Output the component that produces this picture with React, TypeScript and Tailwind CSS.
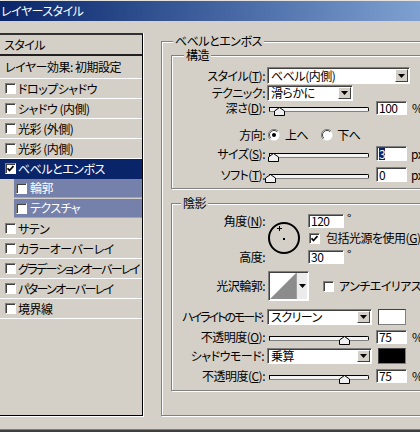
import React from 'react';

const sunken = 'border border-[#808080] border-r-white border-b-white shadow-[inset_1px_1px_0_#404040]';

const Check: React.FC<{ checked?: boolean }> = ({ checked = false }) => (
  <span className={`flex h-[11px] w-[11px] shrink-0 items-center justify-center bg-white ${sunken}`}>
    {checked && (
      <svg width="7" height="7" viewBox="0 0 7 7">
        <path d="M0.5 3.2 L2.5 5.5 L6.5 1" stroke="#000" strokeWidth="1.7" fill="none" />
      </svg>
    )}
  </span>
);

const Radio: React.FC<{ on?: boolean }> = ({ on = false }) => (
  <svg width="12" height="12" viewBox="0 0 12 12" className="shrink-0">
    <circle cx="6" cy="6" r="5.5" fill="#fff" />
    <path d="M10 2A5.5 5.5 0 0 0 2 10" stroke="#808080" strokeWidth="1" fill="none" />
    <path d="M9.2 2.8A4.5 4.5 0 0 0 2.8 9.2" stroke="#404040" strokeWidth="1" fill="none" />
    {on && <circle cx="6" cy="6" r="2" fill="#000" />}
  </svg>
);

const Arrow = () => (
  <svg width="7" height="4" viewBox="0 0 7 4">
    <path d="M0 0H7L3.5 4Z" fill="#000" />
  </svg>
);

const Select: React.FC<{ value: string; className: string }> = ({ value, className }) => (
  <div className={`flex shrink-0 items-stretch bg-white p-[1px] ${sunken} ${className}`}>
    <span className="flex flex-1 items-center pl-[2px] leading-none whitespace-nowrap">{value}</span>
    <span className="flex w-[13px] items-center justify-center border border-white border-r-[#404040] border-b-[#404040] bg-[#d4d0c8]">
      <Arrow />
    </span>
  </div>
);

const Field: React.FC<{ children: React.ReactNode; className: string }> = ({ children, className }) => (
  <div className={`flex shrink-0 items-center bg-white pl-[2px] leading-none ${sunken} ${className}`}>{children}</div>
);

const Slider: React.FC<{ pos: number }> = ({ pos }) => (
  <div className="relative ml-[2px] h-full w-[102px] shrink-0">
    <div className="absolute top-1/2 right-0 left-[2px] h-[5px] -translate-y-[1px] rounded-r-[2px] border border-[#000] border-b-[#808080] bg-[#f4f4f4]" />
    {/* thumb */}
    <svg className="absolute top-1/2 -translate-y-[1px]" style={{ left: pos }} width="11" height="9" viewBox="0 0 11 9">
      <path d="M0.5 8.5V4L5.5 0.5L10.5 4V8.5Z" fill="#f0f0f0" stroke="#000" />
    </svg>
  </div>
);

// right-aligned label column
const Label: React.FC<{ children: React.ReactNode; className?: string }> = ({ children, className = '' }) => (
  <span className={`flex w-[93px] shrink-0 justify-end leading-none whitespace-nowrap ${className}`}>
    <span>{children}</span>
  </span>
);

const U: React.FC<{ children: React.ReactNode }> = ({ children }) => <span className="underline underline-offset-1">{children}</span>;

type Item = { name: string; kind?: 'sel' | 'sub'; checked?: boolean; cls?: string };

const items: Item[] = [
  { name: 'ドロップシャドウ' },
  { name: 'シャドウ (内側)' },
  { name: '光彩 (外側)' },
  { name: '光彩 (内側)' },
  { name: 'ベベルとエンボス', kind: 'sel', checked: true },
  { name: '輪郭', kind: 'sub' },
  { name: 'テクスチャ', kind: 'sub' },
  { name: 'サテン' },
  { name: 'カラーオーバーレイ' },
  { name: 'グラデーションオーバーレイ', cls: 'tracking-[-1.6px]' },
  { name: 'パターンオーバーレイ', cls: 'tracking-[-1.6px]' },
  { name: '境界線' },
];

const ListRow: React.FC<{ item: Item }> = ({ item }) => {
  if (item.kind === 'sub') {
    return (
      <div className="flex h-[20px] shrink-0 border-b border-[#d4d0c8] pl-[14px]">
        <div className="flex flex-1 items-center gap-[3px] border-b border-[#9aa3c2] bg-[#7581ab] pl-[2px] text-white">
          <Check />
          <span className="leading-none">{item.name}</span>
        </div>
      </div>
    );
  }
  const sel = item.kind === 'sel';
  return (
    <div
      className={`flex h-[20px] shrink-0 items-center gap-[2px] overflow-hidden border-b pl-[5px] whitespace-nowrap ${
        sel ? 'border-[#0a246a] bg-[#0a246a] text-white' : 'border-white'
      }`}
    >
      <Check checked={item.checked} />
      <span className={`leading-none ${item.cls ?? ''}`}>{item.name}</span>
    </div>
  );
};

export default function App() {
  return (
    <div className="flex h-[432px] w-[420px] flex-col overflow-hidden bg-[#d4d0c8] font-['Noto_Sans_CJK_JP',sans-serif] text-[12px] tracking-[-0.5px] text-black [font-feature-settings:'palt']">
      {/* Title bar */}
      <div className="flex h-[21px] shrink-0 items-center border-t border-[#e4e2de] bg-linear-to-r from-[#0a246a] to-[#7fa1d1] pl-[1px] text-white">
        <span className="leading-none">レイヤースタイル</span>
      </div>

      {/* Body */}
      <div className="flex flex-1">
        {/* Styles list */}
        <div className="w-[144px] shrink-0 pt-[12px]">
          <div className="flex h-[384px] flex-col border-r border-b border-white">
            <div className="flex flex-1 flex-col border-t-2 border-r border-b border-t-[#303030] border-r-black border-b-black">
              <div className="flex h-[21px] shrink-0 items-center border-b-2 border-[#202020] pl-[4px] leading-none">スタイル</div>
              <div className="flex h-[23px] shrink-0 items-center border-b border-white pl-[5px] leading-none whitespace-nowrap">
                レイヤー効果: 初期設定
              </div>
              {items.map((it) => (
                <ListRow key={it.name} item={it} />
              ))}
            </div>
          </div>
        </div>

        {/* Settings */}
        <div className="ml-[17px] shrink-0 pt-[20px]">
          <div className="relative h-[375px] w-[300px] border border-[#808080] pt-[13px] pl-[9px] shadow-[inset_1px_1px_0_#fff,1px_1px_0_#fff]">
            <span className="absolute -top-[9px] left-[11px] bg-[#d4d0c8] px-[2px] leading-[15px]">ベベルとエンボス</span>

            {/* 構造 */}
            <div className="relative h-[134px] w-[300px] border border-[#808080] pt-[11px] shadow-[inset_1px_1px_0_#fff,1px_1px_0_#fff]">
              <span className="absolute -top-[9px] left-[12px] bg-[#d4d0c8] px-[2px] leading-[15px]">構造</span>

              <div className="flex h-[17px] items-center">
                <Label>
                  スタイル(<U>T</U>):
                </Label>
                <Select value="ベベル(内側)" className="ml-[2px] h-[17px] w-[143px]" />
              </div>
              <div className="mt-[1px] flex h-[16px] items-center">
                <Label>テクニック:</Label>
                <Select value="滑らかに" className="ml-[2px] h-[16px] w-[86px]" />
              </div>
              <div className="flex h-[14px] items-center">
                <Label>
                  深さ(<U>D</U>):
                </Label>
                <Slider pos={7} />
                <Field className="ml-[7px] h-[14px] w-[31px]">100</Field>
                <span className="ml-[5px] leading-none">%</span>
              </div>
              <div className="mt-[13px] flex h-[14px] items-center">
                <Label>方向:</Label>
                <span className="ml-[3px]">
                  <Radio on />
                </span>
                <span className="ml-[5px] leading-none">上へ</span>
                <span className="ml-[13px]">
                  <Radio />
                </span>
                <span className="ml-[4px] leading-none">下へ</span>
              </div>
              <div className="mt-[4px] flex h-[15px] items-center">
                <Label>
                  サイズ(<U>S</U>):
                </Label>
                <Slider pos={1} />
                <Field className="ml-[7px] h-[15px] w-[31px]">
                  <span className="bg-[#0a246a] text-white">3</span>
                </Field>
                <span className="ml-[4px] leading-none">px</span>
              </div>
              <div className="mt-[6px] flex h-[15px] items-center">
                <Label>
                  ソフト(<U>T</U>):
                </Label>
                <Slider pos={-2} />
                <Field className="ml-[7px] h-[15px] w-[31px]">0</Field>
                <span className="ml-[4px] leading-none">px</span>
              </div>
            </div>

            {/* 陰影 */}
            <div className="relative mt-[14px] h-[188px] w-[300px] border border-[#808080] pt-[10px] shadow-[inset_1px_1px_0_#fff,1px_1px_0_#fff]">
              <span className="absolute -top-[9px] left-[9px] bg-[#d4d0c8] px-[2px] leading-[15px]">陰影</span>

              <div className="flex h-[50px]">
                <div className="flex w-[93px] shrink-0 flex-col items-end justify-between">
                  <span className="flex h-[14px] items-center leading-none">
                    角度(<U>N</U>):
                  </span>
                  <span className="flex h-[14px] items-center leading-none">高度:</span>
                </div>
                <div className="ml-[2px] w-[41px] shrink-0 pt-[7px]">
                  <svg width="34" height="34" viewBox="0 0 34 34">
                    <circle cx="17" cy="17" r="15" fill="none" stroke="#000" strokeWidth="2" />
                    <rect x="16" y="17" width="2" height="2" fill="#000" />
                    <path d="M12.5 5v5M10 7.5h5" stroke="#000" strokeWidth="1" />
                  </svg>
                </div>
                <div className="flex flex-col">
                  <div className="flex h-[14px]">
                    <Field className="h-[14px] w-[36px]">120</Field>
                    <span className="ml-[3px] -mt-[2px] leading-none">°</span>
                  </div>
                  <div className="mt-[3px] flex h-[14px] items-center whitespace-nowrap">
                    <span className="ml-[1px]">
                      <Check checked />
                    </span>
                    <span className="ml-[6px] leading-none">
                      包括光源を使用(<U>G</U>)
                    </span>
                  </div>
                  <div className="mt-[5px] flex h-[14px]">
                    <Field className="h-[14px] w-[36px]">30</Field>
                    <span className="ml-[3px] -mt-[2px] leading-none">°</span>
                  </div>
                </div>
              </div>

              <div className="mt-[7px] flex h-[30px] items-center whitespace-nowrap">
                <Label>光沢輪郭:</Label>
                <div className={`ml-[3px] flex h-[30px] w-[41px] shrink-0 bg-white p-[1px] ${sunken}`}>
                  <svg className="h-full flex-1" viewBox="0 0 28 26" preserveAspectRatio="none">
                    <path d="M0 26L28 0V26Z" fill="#8c8c8c" />
                  </svg>
                  <span className="flex w-[11px] items-center justify-center border-l border-[#a0a0a0] bg-[#ececec]">
                    <Arrow />
                  </span>
                </div>
                <span className="ml-[14px]">
                  <Check />
                </span>
                <span className="ml-[5px] leading-none">
                  アンチエイリアス(<U>L</U>)
                </span>
              </div>

              <div className="mt-[8px] flex h-[16px] items-center">
                <Label className="pr-[3px] tracking-[-2px]">ハイライトのモード:</Label>
                <Select value="スクリーン" className="ml-[2px] h-[16px] w-[105px]" />
                <span className="ml-[6px] h-[16px] w-[28px] shrink-0 border border-[#404040] border-r-[#808080] border-b-[#808080] bg-white" />
              </div>
              <div className="mt-[5px] flex h-[14px] items-center">
                <Label>
                  不透明度(<U>O</U>):
                </Label>
                <Slider pos={72} />
                <Field className="ml-[7px] h-[14px] w-[31px]">75</Field>
                <span className="ml-[5px] leading-none">%</span>
              </div>
              <div className="mt-[4px] flex h-[16px] items-center">
                <Label className="pr-[1px]">シャドウモード:</Label>
                <Select value="乗算" className="ml-[2px] h-[16px] w-[105px]" />
                <span className="ml-[6px] h-[16px] w-[28px] shrink-0 border border-[#404040] border-r-[#808080] border-b-[#808080] bg-black" />
              </div>
              <div className="mt-[5px] flex h-[14px] items-center">
                <Label>
                  不透明度(<U>C</U>):
                </Label>
                <Slider pos={72} />
                <Field className="ml-[7px] h-[14px] w-[31px]">75</Field>
                <span className="ml-[5px] leading-none">%</span>
              </div>
            </div>
          </div>
        </div>
      </div>

      {/* window bottom edge */}
      <div className="h-[3px] shrink-0 border-t border-[#808080] bg-[#404040]" />
    </div>
  );
}
